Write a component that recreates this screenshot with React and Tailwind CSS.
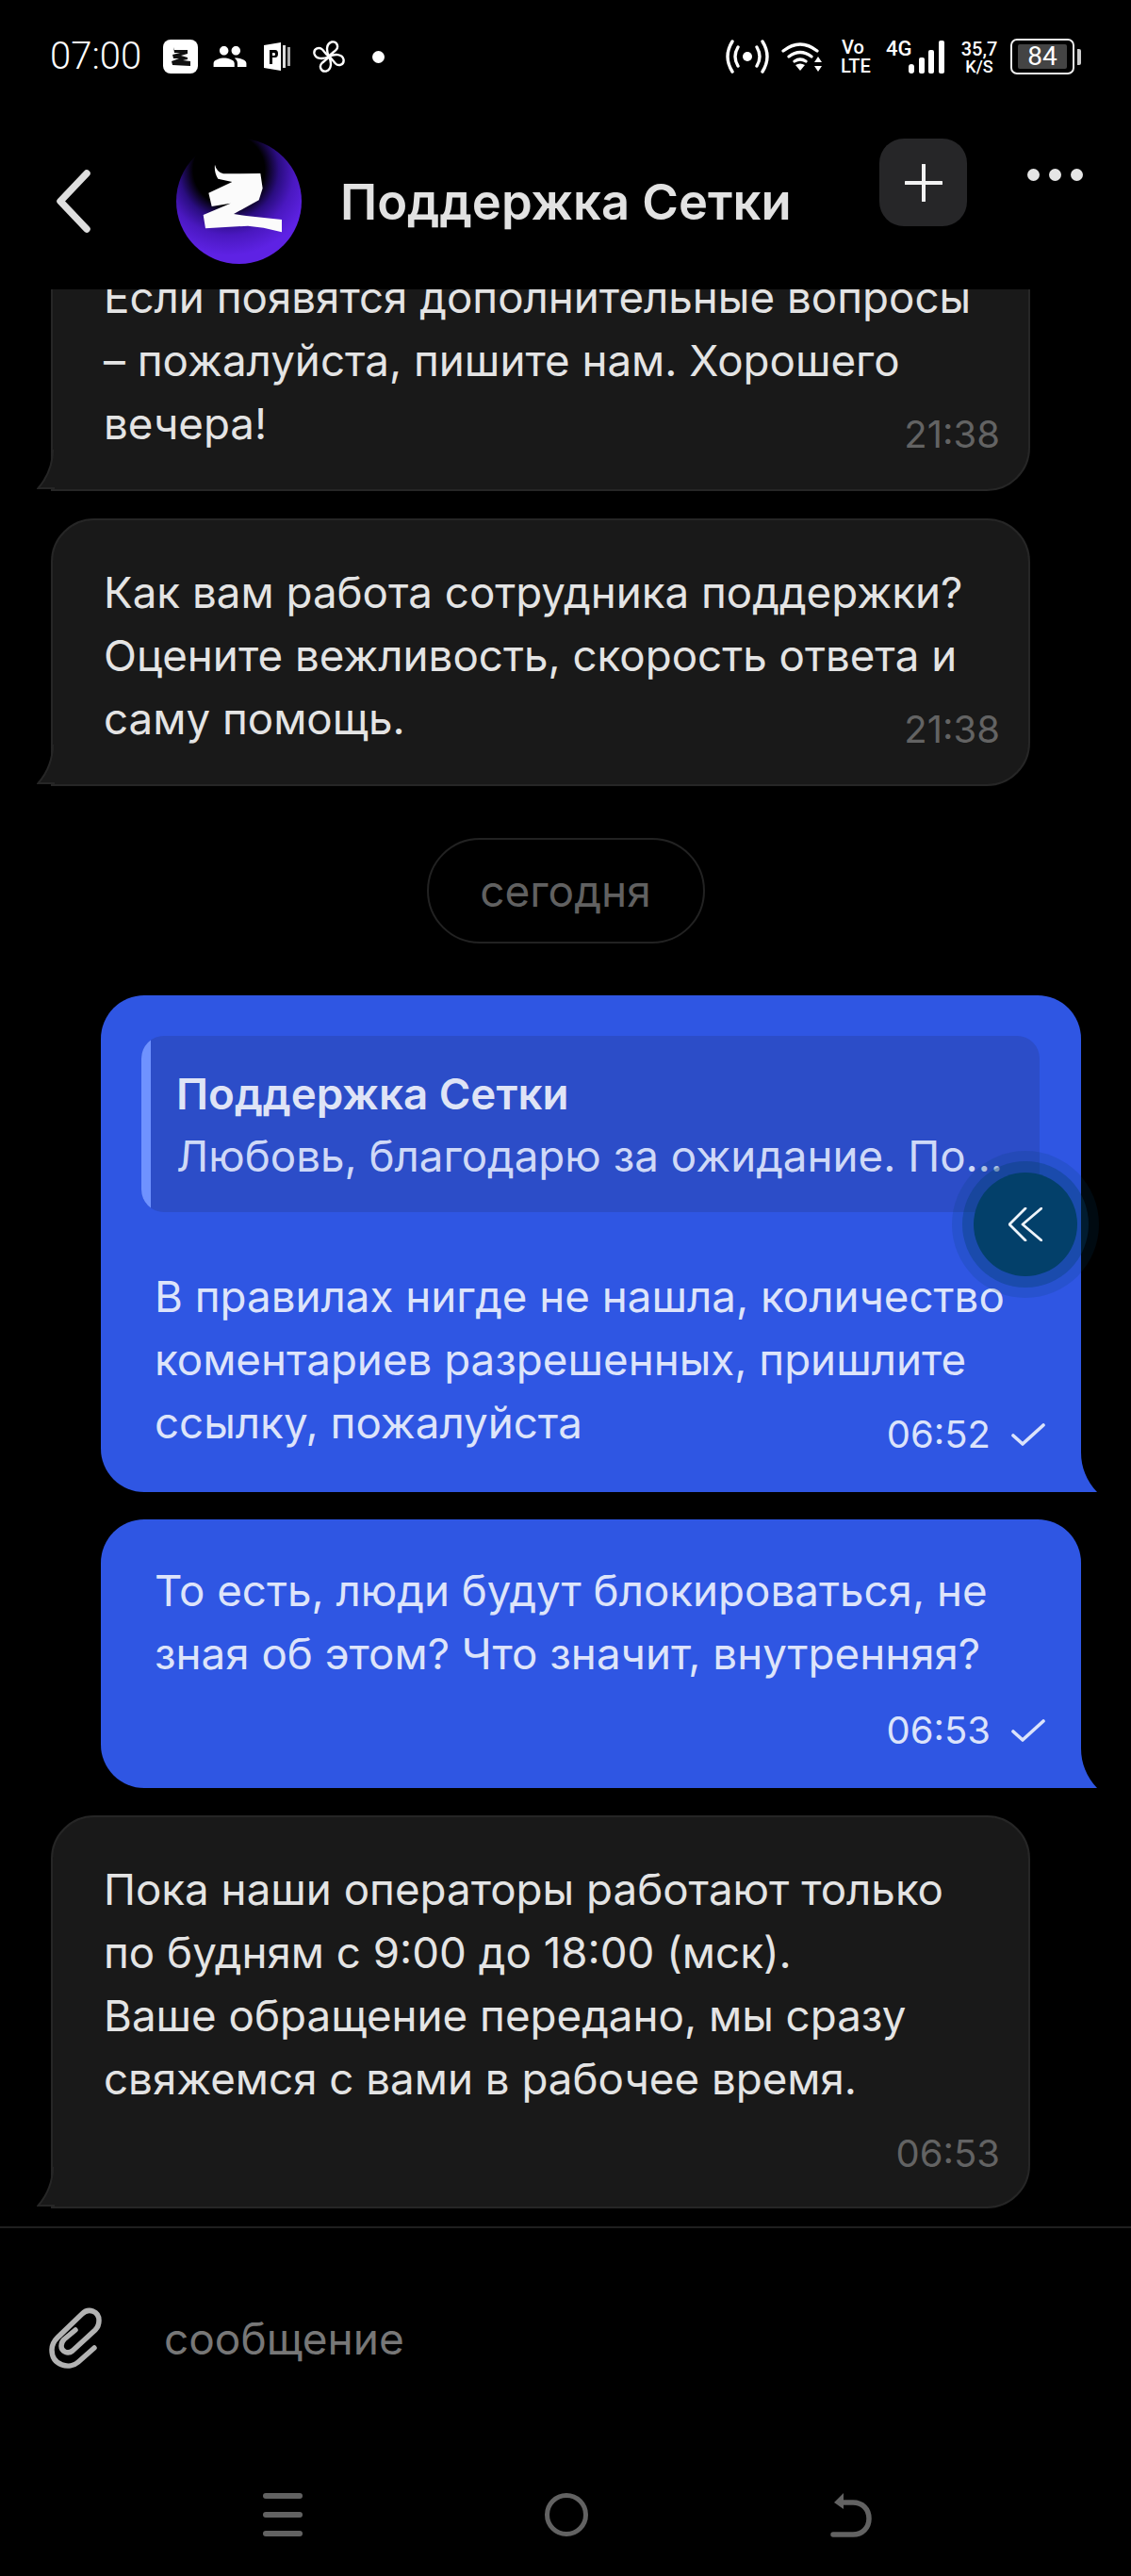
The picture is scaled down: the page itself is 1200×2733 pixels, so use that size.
import React from "react";
import { MdPeople } from "react-icons/md";

const FONT = "font-['Inter','Liberation_Sans',sans-serif]";

function Tail({ side, fill, stroke }) {
  const cls = side === "left" ? "absolute left-[-17px] bottom-0" : "absolute right-[-17px] bottom-0 -scale-x-100";
  return (
    <svg className={cls} width="19" height="42" viewBox="0 0 19 42">
      <path d="M19 0 L17 0 C17 16 11 30 0 42 L19 42 Z" fill={fill} />
      {stroke && <path d="M17 0 C17 16 11 30 1.5 41 L19 41" fill="none" stroke={stroke} strokeWidth="2" />}
    </svg>
  );
}

function Check() {
  return (
    <svg width="36" height="28" viewBox="0 0 36 28" fill="none" stroke="#dbe3fb" strokeWidth="3.6" strokeLinecap="round" strokeLinejoin="round">
      <path d="M2 15 L12 24 L34 4" />
    </svg>
  );
}

function Incoming({ lines, time, inline }) {
  return (
    <div className={`relative ml-[54px] w-[1039px] shrink-0 rounded-[46px] rounded-bl-none border-2 border-[#262626] bg-[#191919] pl-[54px] pr-[30px] pt-[43px] ${inline ? "pb-[33px]" : "pb-[31px]"}`}>
      <div className="text-[45.7px] leading-[67px] text-[#e4e4e4]">
        {lines.map((l) => (
          <div key={l} className="whitespace-nowrap">{l}</div>
        ))}
      </div>
      <div className={`flex justify-end text-[40px] leading-[50px] text-[#636363] ${inline ? "-mt-[47px]" : "mt-[21px]"}`}>{time}</div>
      <Tail side="left" fill="#191919" stroke="#262626" />
    </div>
  );
}

function Outgoing({ children, lines, time, timeClass }) {
  return (
    <div className="relative ml-[107px] w-[1040px] shrink-0 rounded-[46px] rounded-br-none bg-[#2f56e3]">
      {children}
      <div className="px-[57px] text-[45.7px] leading-[67px] text-[#dde4fa]">
        {lines.map((l) => (
          <div key={l} className="whitespace-nowrap">{l}</div>
        ))}
      </div>
      <div className={`flex items-center justify-end gap-[22px] pr-[38px] text-[40px] leading-[50px] text-[#dbe3fb] ${timeClass}`}>
        <span>{time}</span>
        <Check />
      </div>
      <Tail side="right" fill="#2f56e3" />
    </div>
  );
}

function StatusBar() {
  const blade = "M17 17 C14 11 14 3 20 1.5 C26 0.5 27.5 7 24.5 10 C22 12.5 19 14 17 17 Z";
  return (
    <div className="mt-[40px] flex h-[40px] items-center justify-between pl-[53px] pr-[53px] font-['Roboto',sans-serif] text-white">
      <div className="flex items-center">
        <span className="w-[120px] text-[40px] font-light leading-[40px]">07:00</span>
        <div className="flex h-[36px] w-[37px] items-center justify-center rounded-[8px] bg-white">
          <svg width="22" height="20" viewBox="0 0 22 20"><path d="M3 0 L4 3 L18 3 L18 7 L11 9 L18 11 L18 13 L13 14 L21 15 L21 20 L2 19 L1 15 L9 12 L3 12 L2 8 L10 6 L4 6 Z" fill="#111" /></svg>
        </div>
        <MdPeople className="ml-[15px] text-[#fff]" size={38} />
        <svg className="ml-[17px]" width="30" height="30" viewBox="0 0 30 30">
          <path d="M0 3 L18 0 L18 30 L0 27 Z" fill="#fff" />
          <path d="M6 8 H12 Q15 8 15 12 Q15 16 12 16 H9 V23 H6 Z M9 11 V14 H11 Q12 14 12 12.5 Q12 11 11 11 Z" fill="#000" fillRule="evenodd" />
          <rect x="20" y="3" width="3" height="24" fill="#ddd" />
          <rect x="25" y="5" width="3" height="20" fill="#aaa" />
        </svg>
        <svg className="ml-[22px]" width="34" height="34" viewBox="0 0 34 34" fill="none" stroke="#fff" strokeWidth="2.4" strokeLinejoin="round">
          <path d={blade} />
          <path d={blade} transform="rotate(90 17 17)" />
          <path d={blade} transform="rotate(180 17 17)" />
          <path d={blade} transform="rotate(270 17 17)" />
        </svg>
        <div className="ml-[29px] h-[13px] w-[13px] rounded-full bg-white" />
      </div>
      <div className="flex items-center">
        <svg width="46" height="36" viewBox="0 0 46 36" fill="none" stroke="#fff" strokeWidth="3.4" strokeLinecap="round">
          <circle cx="23" cy="18" r="5" fill="#fff" stroke="none" />
          <path d="M13 8 Q7 18 13 28 M33 8 Q39 18 33 28 M7 2 Q-3 18 7 34 M39 2 Q49 18 39 34" />
        </svg>
        <svg className="ml-[13px]" width="44" height="34" viewBox="0 0 44 34" fill="none" stroke="#fff" strokeWidth="3.2" strokeLinecap="round">
          <path d="M2 11 Q20 -3 38 11 M8 17 Q20 8 32 17 M14 22 Q20 18 26 22" />
          <path d="M20 32 L15 26 Q20 23 25 26 Z" fill="#fff" stroke="none" />
          <path d="M39 17 L43 23 H35 Z M39 33 L35 27 H43 Z" fill="#fff" stroke="none" />
        </svg>
        <div className="ml-[19px] w-[36px] text-[20px] font-medium leading-[20px]">
          <div className="pl-[1px]">Vo</div>
          <div>LTE</div>
        </div>
        <div className="relative ml-[12px] flex h-[36px] w-[62px] items-start">
          <span className="text-[22px] font-medium leading-[20px]">4G</span>
          <svg className="absolute right-0 top-0" width="38" height="36" viewBox="0 0 38 36" fill="#fff">
            <rect x="0" y="26" width="6" height="10" rx="3" />
            <rect x="11" y="19" width="6" height="17" rx="2" />
            <rect x="21" y="11" width="6" height="25" rx="2" />
            <rect x="32" y="1" width="6" height="35" rx="2" />
          </svg>
        </div>
        <div className="ml-[16px] w-[42px] text-center">
          <div className="whitespace-nowrap text-[20px] font-medium leading-[20px]">35,7</div>
          <div className="whitespace-nowrap text-[18px] font-medium leading-[17px]">K/S</div>
        </div>
        <div className="ml-[12px] flex h-[38px] w-[68px] items-center justify-center rounded-[7px] border-2 border-[#eee]">
          <span className="flex h-[26px] w-[52px] items-center justify-center rounded-[2px] bg-[#444] text-[28px] leading-[26px] text-white">84</span>
        </div>
        <div className="ml-[3px] h-[17px] w-[4px] rounded-r-[2px] bg-[#ccc]" />
      </div>
    </div>
  );
}

function Header() {
  return (
    <div className="mt-[67px] flex items-start">
      <svg className="ml-[60px] mt-[33px]" width="36" height="67" viewBox="0 0 36 67" fill="none" stroke="#dedede" strokeWidth="7.5" strokeLinecap="round" strokeLinejoin="round">
        <path d="M32 4 L4 33.5 L32 63" />
      </svg>
      <div className="ml-[91px] h-[133px] w-[133px] shrink-0 overflow-hidden rounded-full bg-[radial-gradient(circle_at_42%_25%,#000_0%,#000_30%,#2a0d80_42%,#4a18c0_55%,#5e22e4_72%)]">
        <svg width="133" height="133" viewBox="22 22 399 399">
          <path d="M145 105 Q150 128 172 134 L290 133 L297 180 L285 218 L205 262 L245 268 L358 280 L358 320 L300 306 L250 300 L115 308 L108 265 L195 228 L135 238 L125 195 L200 160 L155 150 Q142 130 145 105 Z" fill="#fbfbfb" />
        </svg>
      </div>
      <div className="ml-[41px] mt-[33px] w-[572px] whitespace-nowrap text-[52.5px] font-semibold leading-[68px] text-[#e2e2e2]">Поддержка Сетки</div>
      <div className="flex h-[93px] w-[93px] items-center justify-center rounded-[26px] bg-[#262628]">
        <svg width="40" height="40" viewBox="0 0 40 40" stroke="#f2f2f2" strokeWidth="4" strokeLinecap="round">
          <path d="M20 1 V39 M1 20 H39" />
        </svg>
      </div>
      <div className="ml-[64px] mt-[32px] flex gap-[10px]">
        <div className="h-[13px] w-[13px] rounded-full bg-[#e6e6e6]" />
        <div className="h-[13px] w-[13px] rounded-full bg-[#e6e6e6]" />
        <div className="h-[13px] w-[13px] rounded-full bg-[#e6e6e6]" />
      </div>
    </div>
  );
}

function Messages() {
  return (
    <div className="flex h-[2055px] flex-col justify-end gap-[29px] overflow-hidden pb-[19px]">
      <Incoming inline lines={["Если появятся дополнительные вопросы", "– пожалуйста, пишите нам. Хорошего", "вечера!"]} time="21:38" />
      <Incoming inline lines={["Как вам работа сотрудника поддержки?", "Оцените вежливость, скорость ответа и", "саму помощь."]} time="21:38" />
      <div className="my-[26px] flex h-[112px] w-[295px] shrink-0 items-center justify-center self-center rounded-full border-2 border-[#222] text-[46px] text-[#616161]">сегодня</div>
      <Outgoing
        lines={["В правилах нигде не нашла, количество", "коментариев разрешенных, пришлите", "ссылку, пожалуйста"]}
        time="06:52"
        timeClass="-mt-[46px] pb-[36px]"
      >
        <div className="ml-[43px] mr-[44px] mt-[43px] mb-[56px] overflow-hidden rounded-[24px] bg-[#2c4dc8]">
          <div className="border-l-[10px] border-[#6f92ff] pb-[26px] pl-[27px] pt-[29px]">
            <div className="whitespace-nowrap text-[45.7px] font-semibold leading-[66px] text-[#dfe4f6]">Поддержка Сетки</div>
            <div className="whitespace-nowrap text-[45.7px] leading-[66px] text-[#cfd9f7]">Любовь, благодарю за ожидание. По…</div>
          </div>
        </div>
        <div className="absolute left-[926px] top-[188px] flex h-[110px] w-[110px] items-center justify-center rounded-full bg-[#03406a] shadow-[0_0_0_12px_rgba(3,64,105,0.35),0_0_0_23px_rgba(3,64,105,0.16)]">
          <svg width="36" height="36" viewBox="0 0 36 36" fill="none" stroke="#eef4fa" strokeWidth="2.8" strokeLinecap="round" strokeLinejoin="round">
            <path d="M18 1 L1 18 L18 35 M35 1 L15 18 L35 35" />
          </svg>
        </div>
      </Outgoing>
      <Outgoing
        lines={["То есть, люди будут блокироваться, не", "зная об этом? Что значит, внутренняя?"]}
        time="06:53"
        timeClass="mt-[23px] pb-[36px]"
      >
        <div className="h-[42px]" />
      </Outgoing>
      <Incoming
        lines={["Пока наши операторы работают только", "по будням с 9:00 до 18:00 (мск).", "Ваше обращение передано, мы сразу", "свяжемся с вами в рабочее время."]}
        time="06:53"
      />
    </div>
  );
}

function Composer() {
  return (
    <div className="h-[371px] border-t-2 border-[#1f1f1f]">
      <div className="flex items-center pl-[52px] pt-[83px]">
        <svg width="56" height="67" viewBox="0 0 56 67" fill="none" stroke="#b3b3b3" strokeWidth="5.5" strokeLinecap="round" strokeLinejoin="round">
          <path d="M48 44 L31 59 C22 67 3 63 3 46 C3 40 5 37 9 33 L35 8 C42 1 53 5 53 15 C53 20 51 23 49 25 L25 47 C20 51 13 48 13 42 C13 39 14 37 16 35 L28 25" />
        </svg>
        <div className="ml-[66px] text-[46px] leading-[60px] text-[#777]">сообщение</div>
      </div>
      <div className="mt-[130px] flex items-center">
        <div className="ml-[279px] flex w-[42px] flex-col gap-[14px]">
          <div className="h-[6px] rounded-[3px] bg-[#626262]" />
          <div className="h-[6px] rounded-[3px] bg-[#626262]" />
          <div className="h-[6px] rounded-[3px] bg-[#626262]" />
        </div>
        <div className="ml-[257px] h-[46px] w-[46px] rounded-full border-[5px] border-[#626262]" />
        <svg className="ml-[257px]" width="44" height="48" viewBox="0 0 44 48" fill="none" stroke="#626262" strokeWidth="5.5" strokeLinejoin="round">
          <path d="M3 45 H24 C34 45 41 38 41 28 C41 18 34 11 24 11 H10" strokeLinecap="round" />
          <path d="M14 1 L4 11 L14 18 Z" fill="#626262" stroke="none" />
        </svg>
      </div>
    </div>
  );
}

export default function App() {
  return (
    <div className={`flex h-[2733px] w-[1200px] flex-col overflow-hidden bg-black ${FONT}`}>
      <div className="h-[307px] shrink-0">
        <StatusBar />
        <Header />
      </div>
      <Messages />
      <Composer />
    </div>
  );
}
